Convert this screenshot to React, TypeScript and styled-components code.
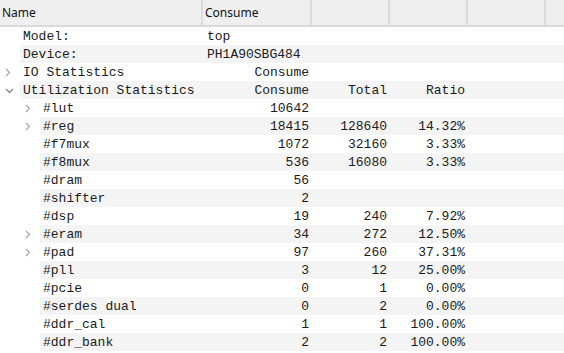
import styled, { createGlobalStyle } from 'styled-components';

type Row = {
  name: string;
  level: number;
  arrow?: 'closed' | 'open';
  value?: string;
  valueAlign?: 'left' | 'right';
  total?: string;
  ratio?: string;
};

const rows: Row[] = [
  { name: 'Model:', level: 0, value: 'top', valueAlign: 'left' },
  { name: 'Device:', level: 0, value: 'PH1A90SBG484', valueAlign: 'left' },
  { name: 'IO Statistics', level: 0, arrow: 'closed', value: 'Consume' },
  { name: 'Utilization Statistics', level: 0, arrow: 'open', value: 'Consume', total: 'Total', ratio: 'Ratio' },
  { name: '#lut', level: 1, arrow: 'closed', value: '10642' },
  { name: '#reg', level: 1, arrow: 'closed', value: '18415', total: '128640', ratio: '14.32%' },
  { name: '#f7mux', level: 1, value: '1072', total: '32160', ratio: '3.33%' },
  { name: '#f8mux', level: 1, value: '536', total: '16080', ratio: '3.33%' },
  { name: '#dram', level: 1, value: '56' },
  { name: '#shifter', level: 1, value: '2' },
  { name: '#dsp', level: 1, value: '19', total: '240', ratio: '7.92%' },
  { name: '#eram', level: 1, arrow: 'closed', value: '34', total: '272', ratio: '12.50%' },
  { name: '#pad', level: 1, arrow: 'closed', value: '97', total: '260', ratio: '37.31%' },
  { name: '#pll', level: 1, value: '3', total: '12', ratio: '25.00%' },
  { name: '#pcie', level: 1, value: '0', total: '1', ratio: '0.00%' },
  { name: '#serdes dual', level: 1, value: '0', total: '2', ratio: '0.00%' },
  { name: '#ddr_cal', level: 1, value: '1', total: '1', ratio: '100.00%' },
  { name: '#ddr_bank', level: 1, value: '2', total: '2', ratio: '100.00%' },
];

const NAME_W = 204;
const INDENT = 20;

const Chevron = ({ open }: { open: boolean }) =>
  open ? (
    <svg width="9" height="6" viewBox="0 0 9 6">
      <path d="M1 1 L4.5 4.5 L8 1" fill="none" stroke="#8a8a8a" strokeWidth="1.3" />
    </svg>
  ) : (
    <svg width="6" height="9" viewBox="0 0 6 9">
      <path d="M1 1 L4.5 4.5 L1 8" fill="none" stroke="#a8a8a8" strokeWidth="1.3" />
    </svg>
  );

const App = () => {
  return (
    <>
      <GlobalStyle />
      <Tree>
        <Header>
          <HeadCell $w={NAME_W}>Name</HeadCell>
          <HeadCell $w={109}>Consume</HeadCell>
          <HeadCell $w={78} />
          <HeadCell $w={78} />
          <HeadCell $w={78} />
          <HeadCell $w={0} $grow />
        </Header>
        {rows.map((r, i) => (
          <TreeRow key={r.name}>
            <Indent $level={r.level}>
              {r.arrow && (
                <ArrowBox>
                  <Chevron open={r.arrow === 'open'} />
                </ArrowBox>
              )}
            </Indent>
            <RowBody $alt={i % 2 === 1}>
              <NameCell $w={NAME_W - INDENT * (r.level + 1)}>{r.name}</NameCell>
              <ValueCell $w={109} $align={r.valueAlign ?? 'right'}>
                {r.value}
              </ValueCell>
              <ValueCell $w={78} $align="right">
                {r.total}
              </ValueCell>
              <ValueCell $w={78} $align="right">
                {r.ratio}
              </ValueCell>
            </RowBody>
          </TreeRow>
        ))}
      </Tree>
    </>
  );
};

export default App;

const GlobalStyle = createGlobalStyle`
  html, body {
    margin: 0;
    padding: 0;
    background: #ffffff;
    overflow: hidden;
  }
`;

const Tree = styled.div`
  width: 564px;
  height: 353px;
  display: flex;
  flex-direction: column;
  background: #ffffff;
  font-family: 'Liberation Mono', 'Courier New', monospace;
  font-size: 13px;
  color: #1a1a1a;
`;

const Header = styled.div`
  display: flex;
  height: 25px;
  background: #efefef;
  border-bottom: 2px solid #dadada;
  flex-shrink: 0;
`;

const HeadCell = styled.div<{ $w: number; $grow?: boolean }>`
  width: ${p => p.$w}px;
  flex: ${p => (p.$grow ? 1 : 'none')};
  box-sizing: border-box;
  padding-left: 2px;
  border-right: ${p => (p.$grow ? 'none' : '2px solid #dadada')};
  font-family: 'Noto Sans', 'Open Sans', sans-serif;
  font-size: 12px;
  line-height: 25px;
  color: #111;
  &:first-child {
    width: ${p => p.$w - 1}px;
  }
`;

const TreeRow = styled.div`
  display: flex;
  height: 18px;
  flex-shrink: 0;
`;

const Indent = styled.div<{ $level: number }>`
  width: ${p => INDENT * (p.$level + 1)}px;
  flex: none;
  display: flex;
  justify-content: flex-end;
  align-items: center;
`;

const ArrowBox = styled.div`
  width: 20px;
  height: 18px;
  display: flex;
  align-items: center;
  padding: 1px 0 0 5px;
  box-sizing: border-box;
`;

const RowBody = styled.div<{ $alt: boolean }>`
  flex: 1;
  display: flex;
  height: 18px;
  overflow: hidden;
  background: ${p => (p.$alt ? '#f4f4f4' : '#ffffff')};
  line-height: 20px;
  white-space: pre;
`;

const NameCell = styled.div<{ $w: number }>`
  width: ${p => p.$w}px;
  flex: none;
  padding-left: 3px;
  box-sizing: border-box;
`;

const ValueCell = styled.div<{ $w: number; $align: 'left' | 'right' }>`
  width: ${p => p.$w}px;
  flex: none;
  box-sizing: border-box;
  text-align: ${p => p.$align};
  padding: ${p => (p.$align === 'left' ? '0 0 0 3px' : '0 4px 0 0')};
`;
